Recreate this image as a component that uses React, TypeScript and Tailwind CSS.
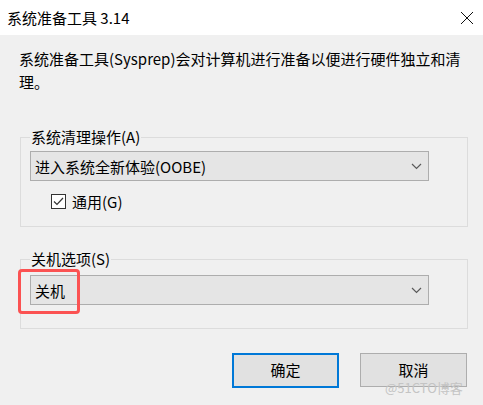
const FONT = "font-['Microsoft_YaHei','Noto_Sans_CJK_SC',sans-serif]"

function Chevron() {
  return (
    <svg width="11" height="7" viewBox="0 0 11 7" className="shrink-0">
      <polyline points="1,1 5.5,5.5 10,1" fill="none" stroke="#5a5a5a" strokeWidth="1.2" />
    </svg>
  )
}

function Combo({ value }: { value: string }) {
  return (
    <div className="flex h-[30px] w-[399px] items-center justify-between border border-[#adadad] bg-[#e5e5e5] pl-[4px] pr-[6px]">
      <span className="text-[15px] leading-none text-black">{value}</span>
      <Chevron />
    </div>
  )
}

export default function App() {
  return (
    <div className={`${FONT} relative h-[405px] w-[483px] overflow-hidden bg-[#f0f0f0] text-black`}>
      {/* Title bar */}
      <div className="flex h-[35px] items-center justify-between bg-white pl-[7px] pr-[8px]">
        <span className="text-[15px] leading-none">系统准备工具 3.14</span>
        <svg width="14" height="14" viewBox="0 0 14 14" className="mr-[1px]">
          <path d="M1 1 L13 13 M13 1 L1 13" stroke="#111" strokeWidth="1" />
        </svg>
      </div>

      <div className="pl-[20px] pr-[15px]">
        <p className="-ml-[1px] pt-[12px] text-[15px] leading-[23px]">
          系统准备工具(Sysprep)会对计算机进行准备以便进行硬件独立和清理。
        </p>

        {/* Cleanup action */}
        <fieldset className="mt-[34px] h-[100px] border border-[#dcdcdc] pl-[9px]">
          <legend className="px-[1px] text-[15px] leading-[20px]">系统清理操作(A)</legend>
          <div className="mt-[4px]">
            <Combo value="进入系统全新体验(OOBE)" />
          </div>
          <label className="ml-[21px] mt-[13px] flex items-center gap-[6px]">
            <span className="flex h-[15px] w-[15px] items-center justify-center border border-[#333] bg-white">
              <svg width="11" height="9" viewBox="0 0 11 9">
                <polyline points="1,4.5 4,7.5 10,1" fill="none" stroke="#333" strokeWidth="1.2" />
              </svg>
            </span>
            <span className="text-[15px] leading-none">通用(G)</span>
          </label>
        </fieldset>

        {/* Shutdown options */}
        <fieldset className="mt-[22px] h-[80px] border border-[#dcdcdc] pl-[9px]">
          <legend className="px-[1px] text-[15px] leading-[20px]">关机选项(S)</legend>
          <div className="relative mt-[6px]">
            <Combo value="关机" />
            <div className="absolute left-[-12px] top-[-6px] h-[45px] w-[62px] rounded-[4px] border-[3px] border-[#fb5252]" />
          </div>
        </fieldset>

        <div className="mt-[24px] flex justify-end gap-[21px] pr-[1px]">
          <button className="h-[35px] w-[107px] border-2 border-[#0078d7] bg-[#e1e1e1] text-[15px]">确定</button>
          <button className="h-[34px] w-[107px] border border-[#adadad] bg-[#e1e1e1] text-[15px]">取消</button>
        </div>
      </div>

      <span className="absolute left-[385px] top-[381px] text-[13px] leading-none text-[#c4c4c4]">@51CTO博客</span>
    </div>
  )
}
